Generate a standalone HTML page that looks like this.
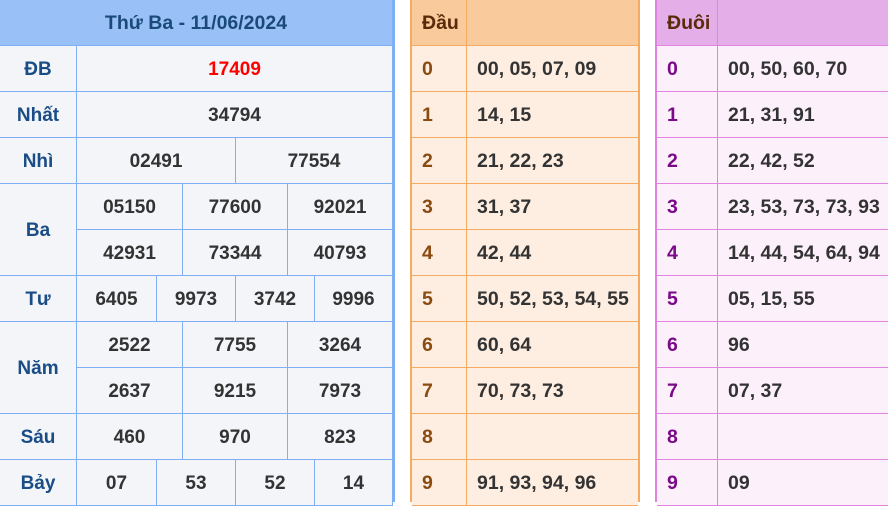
<!DOCTYPE html>
<html><head><meta charset="utf-8"><style>
*{margin:0;padding:0;box-sizing:border-box}
body{width:888px;height:502px;overflow:hidden;background:#fff;font-family:"Liberation Sans",Arial,sans-serif;font-weight:bold;font-size:19px;position:relative}
.c{position:absolute;display:flex;align-items:center;justify-content:center;color:#333;padding-top:2px}
.m{background:#f3f5f9;border-right:1px solid #7fb0f5;border-bottom:1px solid #7fb0f5}
.l{color:#1a4c86}
.o{background:#fdeee1;border-right:1px solid #f5ac62;border-bottom:1px solid #f5ac62;justify-content:flex-start;padding-left:10px;font-size:19.5px}
.p{background:#fcf0fb;border-right:1px solid #e283e2;border-bottom:1px solid #e283e2;justify-content:flex-start;padding-left:10px;font-size:19.5px}
.on{color:#8a4a10}.pn{color:#7a0a88}
</style></head><body>
<div class="c m" style="left:0;top:0;width:393px;height:46px;background:#9ac0f8;color:#1a4a7a;font-size:19.5px">Thứ Ba - 11/06/2024</div>
<div style="position:absolute;left:393px;top:0;width:2px;height:502px;background:#7fb0f5"></div>

<div class="c m l" style="left:0;top:46px;width:77px;height:46px">ĐB</div>
<div class="c m" style="left:77px;top:46px;width:316px;height:46px;color:#f00">17409</div>

<div class="c m l" style="left:0;top:92px;width:77px;height:46px">Nhất</div>
<div class="c m" style="left:77px;top:92px;width:316px;height:46px">34794</div>

<div class="c m l" style="left:0;top:138px;width:77px;height:46px">Nhì</div>
<div class="c m" style="left:77px;top:138px;width:159px;height:46px">02491</div>
<div class="c m" style="left:236px;top:138px;width:157px;height:46px">77554</div>

<div class="c m l" style="left:0;top:184px;width:77px;height:92px">Ba</div>
<div class="c m" style="left:77px;top:184px;width:106px;height:46px">05150</div>
<div class="c m" style="left:183px;top:184px;width:105px;height:46px">77600</div>
<div class="c m" style="left:288px;top:184px;width:105px;height:46px">92021</div>
<div class="c m" style="left:77px;top:230px;width:106px;height:46px">42931</div>
<div class="c m" style="left:183px;top:230px;width:105px;height:46px">73344</div>
<div class="c m" style="left:288px;top:230px;width:105px;height:46px">40793</div>

<div class="c m l" style="left:0;top:276px;width:77px;height:46px">Tư</div>
<div class="c m" style="left:77px;top:276px;width:80px;height:46px">6405</div>
<div class="c m" style="left:157px;top:276px;width:79px;height:46px">9973</div>
<div class="c m" style="left:236px;top:276px;width:79px;height:46px">3742</div>
<div class="c m" style="left:315px;top:276px;width:78px;height:46px">9996</div>

<div class="c m l" style="left:0;top:322px;width:77px;height:92px">Năm</div>
<div class="c m" style="left:77px;top:322px;width:106px;height:46px">2522</div>
<div class="c m" style="left:183px;top:322px;width:105px;height:46px">7755</div>
<div class="c m" style="left:288px;top:322px;width:105px;height:46px">3264</div>
<div class="c m" style="left:77px;top:368px;width:106px;height:46px">2637</div>
<div class="c m" style="left:183px;top:368px;width:105px;height:46px">9215</div>
<div class="c m" style="left:288px;top:368px;width:105px;height:46px">7973</div>

<div class="c m l" style="left:0;top:414px;width:77px;height:46px">Sáu</div>
<div class="c m" style="left:77px;top:414px;width:106px;height:46px">460</div>
<div class="c m" style="left:183px;top:414px;width:105px;height:46px">970</div>
<div class="c m" style="left:288px;top:414px;width:105px;height:46px">823</div>

<div class="c m l" style="left:0;top:460px;width:77px;height:46px">Bảy</div>
<div class="c m" style="left:77px;top:460px;width:80px;height:46px">07</div>
<div class="c m" style="left:157px;top:460px;width:79px;height:46px">53</div>
<div class="c m" style="left:236px;top:460px;width:79px;height:46px">52</div>
<div class="c m" style="left:315px;top:460px;width:78px;height:46px">14</div>

<div style="position:absolute;left:410px;top:0;width:2px;height:502px;background:#f5ac62"></div>
<div style="position:absolute;left:638px;top:0;width:2px;height:502px;background:#f5ac62"></div>
<div class="c o" style="left:412px;top:0;width:55px;height:46px;background:#f9ca9c;color:#5a2a0a">Đầu</div>
<div class="c o" style="left:467px;top:0;width:171px;height:46px;background:#f9ca9c;border-right:none"></div>

<div style="position:absolute;left:655px;top:0;width:2px;height:502px;background:#e283e2"></div>
<div class="c p" style="left:657px;top:0;width:61px;height:46px;background:#e4aee8;color:#5a2a0a">Đuôi</div>
<div class="c p" style="left:718px;top:0;width:170px;height:46px;background:#e4aee8;border-right:none"></div>

<div class="c o on" style="left:412px;top:46px;width:55px;height:46px">0</div><div class="c o" style="left:467px;top:46px;width:171px;height:46px;border-right:none">00, 05, 07, 09</div>
<div class="c o on" style="left:412px;top:92px;width:55px;height:46px">1</div><div class="c o" style="left:467px;top:92px;width:171px;height:46px;border-right:none">14, 15</div>
<div class="c o on" style="left:412px;top:138px;width:55px;height:46px">2</div><div class="c o" style="left:467px;top:138px;width:171px;height:46px;border-right:none">21, 22, 23</div>
<div class="c o on" style="left:412px;top:184px;width:55px;height:46px">3</div><div class="c o" style="left:467px;top:184px;width:171px;height:46px;border-right:none">31, 37</div>
<div class="c o on" style="left:412px;top:230px;width:55px;height:46px">4</div><div class="c o" style="left:467px;top:230px;width:171px;height:46px;border-right:none">42, 44</div>
<div class="c o on" style="left:412px;top:276px;width:55px;height:46px">5</div><div class="c o" style="left:467px;top:276px;width:171px;height:46px;border-right:none;white-space:nowrap">50, 52, 53, 54, 55</div>
<div class="c o on" style="left:412px;top:322px;width:55px;height:46px">6</div><div class="c o" style="left:467px;top:322px;width:171px;height:46px;border-right:none">60, 64</div>
<div class="c o on" style="left:412px;top:368px;width:55px;height:46px">7</div><div class="c o" style="left:467px;top:368px;width:171px;height:46px;border-right:none">70, 73, 73</div>
<div class="c o on" style="left:412px;top:414px;width:55px;height:46px">8</div><div class="c o" style="left:467px;top:414px;width:171px;height:46px;border-right:none"></div>
<div class="c o on" style="left:412px;top:460px;width:55px;height:46px">9</div><div class="c o" style="left:467px;top:460px;width:171px;height:46px;border-right:none">91, 93, 94, 96</div>

<div class="c p pn" style="left:657px;top:46px;width:61px;height:46px">0</div><div class="c p" style="left:718px;top:46px;width:170px;height:46px;border-right:none">00, 50, 60, 70</div>
<div class="c p pn" style="left:657px;top:92px;width:61px;height:46px">1</div><div class="c p" style="left:718px;top:92px;width:170px;height:46px;border-right:none">21, 31, 91</div>
<div class="c p pn" style="left:657px;top:138px;width:61px;height:46px">2</div><div class="c p" style="left:718px;top:138px;width:170px;height:46px;border-right:none">22, 42, 52</div>
<div class="c p pn" style="left:657px;top:184px;width:61px;height:46px">3</div><div class="c p" style="left:718px;top:184px;width:170px;height:46px;border-right:none;white-space:nowrap">23, 53, 73, 73, 93</div>
<div class="c p pn" style="left:657px;top:230px;width:61px;height:46px">4</div><div class="c p" style="left:718px;top:230px;width:170px;height:46px;border-right:none;white-space:nowrap">14, 44, 54, 64, 94</div>
<div class="c p pn" style="left:657px;top:276px;width:61px;height:46px">5</div><div class="c p" style="left:718px;top:276px;width:170px;height:46px;border-right:none">05, 15, 55</div>
<div class="c p pn" style="left:657px;top:322px;width:61px;height:46px">6</div><div class="c p" style="left:718px;top:322px;width:170px;height:46px;border-right:none">96</div>
<div class="c p pn" style="left:657px;top:368px;width:61px;height:46px">7</div><div class="c p" style="left:718px;top:368px;width:170px;height:46px;border-right:none">07, 37</div>
<div class="c p pn" style="left:657px;top:414px;width:61px;height:46px">8</div><div class="c p" style="left:718px;top:414px;width:170px;height:46px;border-right:none"></div>
<div class="c p pn" style="left:657px;top:460px;width:61px;height:46px">9</div><div class="c p" style="left:718px;top:460px;width:170px;height:46px;border-right:none">09</div>
</body></html>
